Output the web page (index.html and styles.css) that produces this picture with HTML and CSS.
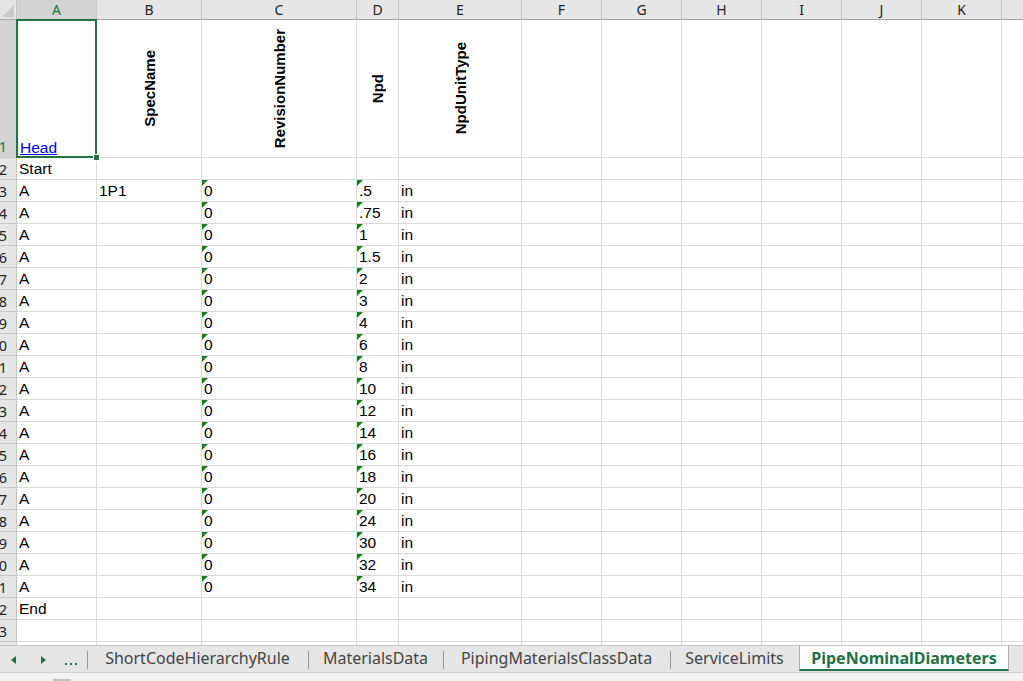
FILE: index.html
```html
<!DOCTYPE html>
<html>
<head>
    <title>PipeNominalDiameters</title>
    <link rel="stylesheet" href="styles.css">
</head>
<body>
    <div class="sheet" id="sheet">
        <!-- column headers -->
        <div class="corner"><span class="select-all"></span></div>
        <div class="ch active">A</div>
        <div class="ch">B</div>
        <div class="ch">C</div>
        <div class="ch">D</div>
        <div class="ch">E</div>
        <div class="ch">F</div>
        <div class="ch">G</div>
        <div class="ch">H</div>
        <div class="ch">I</div>
        <div class="ch">J</div>
        <div class="ch">K</div>
        <div class="ch">L</div>

        <!-- row 1: field names -->
        <div class="rh active">1</div>
        <div class="c head-cell">
            <a href="#" class="link">Head</a>
            <span class="selection"><span class="fill-handle"></span></span>
        </div>
        <div class="c field"><span class="vtext">SpecName</span></div>
        <div class="c field"><span class="vtext">RevisionNumber</span></div>
        <div class="c field"><span class="vtext">Npd</span></div>
        <div class="c field"><span class="vtext">NpdUnitType</span></div>
        <div class="c"></div>
        <div class="c"></div>
        <div class="c"></div>
        <div class="c"></div>
        <div class="c"></div>
        <div class="c"></div>
        <div class="c"></div>
    </div>

    <div class="tabbar">
        <div class="nav">
            <span class="arrow left"></span>
            <span class="arrow right"></span>
            <span class="more"><i></i><i></i><i></i></span>
        </div>
        <div class="tab t1">ShortCodeHierarchyRule</div>
        <div class="tab t2">MaterialsData</div>
        <div class="tab t3">PipingMaterialsClassData</div>
        <div class="tab t4">ServiceLimits</div>
        <div class="tab t5 current">PipeNominalDiameters</div>
    </div>
    <div class="statusbar"><span class="grip"></span></div>

    <script>
        // Nominal sizes listed in the sheet (rows 3-21)
        const npds = ['.5', '.75', '1', '1.5', '2', '3', '4', '6', '8', '10',
                      '12', '14', '16', '18', '20', '24', '30', '32', '34'];

        const rows = [];
        rows.push({ a: 'Start' });
        npds.forEach(function(n, i) {
            rows.push({ a: 'A', b: i === 0 ? '1P1' : '', c: '0', d: n, e: 'in', flag: true });
        });
        rows.push({ a: 'End' });
        rows.push({});
        rows.push({});

        const sheet = document.getElementById('sheet');

        function cell(text, flag) {
            const div = document.createElement('div');
            div.className = 'c';
            if (flag) {
                const tri = document.createElement('span');
                tri.className = 'flag';
                div.appendChild(tri);
            }
            div.appendChild(document.createTextNode(text || ''));
            return div;
        }

        rows.forEach(function(r, i) {
            const rh = document.createElement('div');
            rh.className = 'rh';
            rh.textContent = i + 2;
            sheet.appendChild(rh);

            sheet.appendChild(cell(r.a));
            sheet.appendChild(cell(r.b));
            sheet.appendChild(cell(r.c, r.flag));
            sheet.appendChild(cell(r.d, r.flag));
            sheet.appendChild(cell(r.e));
            for (let k = 0; k < 7; k++) {
                sheet.appendChild(cell(''));
            }
        });
    </script>
</body>
</html>
```

FILE: styles.css
```css
body { margin: 0; width: 1023px; height: 681px; overflow: hidden; background: #fff; font-family: "Liberation Sans", Arial, sans-serif; }

/* grid */
.sheet { display: grid; grid-template-columns: 17px 80px 105px 155px 42px 123px repeat(7, 80px); grid-template-rows: 20px 138px repeat(23, 22px); width: 1023px; height: 645px; overflow: hidden; }
.c { box-sizing: border-box; border-right: 1px solid #dadada; border-bottom: 1px solid #dadada; padding-left: 2px; font-size: 15.5px; line-height: 21px; color: #000; white-space: nowrap; overflow: hidden; position: relative; }
.flag { position: absolute; left: 0; top: 0; width: 0; height: 0; border-top: 6px solid #1a7f1a; border-right: 6px solid transparent; }

/* headers */
.corner { background: #e6e6e6; border-right: 1px solid #c4c4c4; border-bottom: 1px solid #a6a6a6; box-sizing: border-box; position: relative; }
.select-all { position: absolute; right: 2px; bottom: 2px; width: 0; height: 0; border-left: 12px solid transparent; border-bottom: 12px solid #c9c9c9; }
.ch { box-sizing: border-box; background: #e6e6e6; border-right: 1px solid #c8c8c8; border-bottom: 1px solid #a6a6a6; text-align: center; font: 14px/19px "Noto Sans", sans-serif; color: #222; white-space: nowrap; overflow: hidden; }
.ch.active { background: #d3d3d3; color: #217346; }
.rh { box-sizing: border-box; background: #e6e6e6; border-right: 1px solid #c4c4c4; border-bottom: 1px solid #c8c8c8; display: flex; justify-content: flex-end; align-items: center; padding-right: 9px; font: 14.5px "Noto Sans", sans-serif; color: #222; overflow: hidden; white-space: nowrap; }
.rh.active { background: #d3d3d3; color: #217346; align-items: flex-end; padding-bottom: 1px; }

/* row 1 */
.head-cell { overflow: visible; display: flex; align-items: flex-end; padding-left: 3px; line-height: 18px; }
.link { color: #0000ee; text-decoration: underline; }
.selection { position: absolute; left: -1px; top: -1px; right: -1px; bottom: -1px; border: 2px solid #217346; z-index: 2; }
.fill-handle { position: absolute; right: -5px; bottom: -5px; width: 5px; height: 5px; background: #217346; border: 1px solid #fff; }
.field { display: flex; align-items: center; justify-content: center; padding-left: 0; }
.vtext { writing-mode: vertical-rl; transform: rotate(180deg); font-weight: bold; font-size: 15px; line-height: 17px; }

/* sheet tabs */
.tabbar { display: flex; height: 28px; box-sizing: border-box; background: #e6e6e6; border-top: 1px solid #c6c6c6; border-bottom: 1px solid #cfcfcf; font-family: "Noto Sans", sans-serif; font-size: 16px; color: #444; }
.nav { width: 87px; position: relative; flex: none; }
.arrow { position: absolute; top: 10px; width: 0; height: 0; border-top: 4px solid transparent; border-bottom: 4px solid transparent; }
.arrow.left { left: 11px; border-right: 5px solid #217346; }
.arrow.right { left: 41px; border-left: 5px solid #217346; }
.more { position: absolute; left: 65px; top: 17px; display: flex; gap: 3px; }
.more i { width: 2px; height: 2px; background: #217346; }
.tab { flex: none; display: flex; align-items: center; justify-content: center; padding-bottom: 3px; box-sizing: border-box; position: relative; white-space: nowrap; }
.tab::before { content: ""; position: absolute; left: 0; top: 5px; height: 18px; border-left: 1px solid #9a9a9a; }
.t1 { width: 221px; }
.t2 { width: 135px; }
.t3 { width: 227px; }
.t4 { width: 129px; }
.t5 { width: 210px; }
.tab.current { background: #fff; color: #217346; font-weight: bold; border-left: 1px solid #b0b0b0; border-right: 1px solid #b0b0b0; height: 25px; border-bottom: 2px solid #217346; padding-bottom: 0; }
.tab.current::before { display: none; }
.statusbar { height: 8px; background: #f3f3f3; position: relative; }
.grip { position: absolute; left: 53px; bottom: 0; width: 18px; height: 2px; background: #c2c2c2; }
```
